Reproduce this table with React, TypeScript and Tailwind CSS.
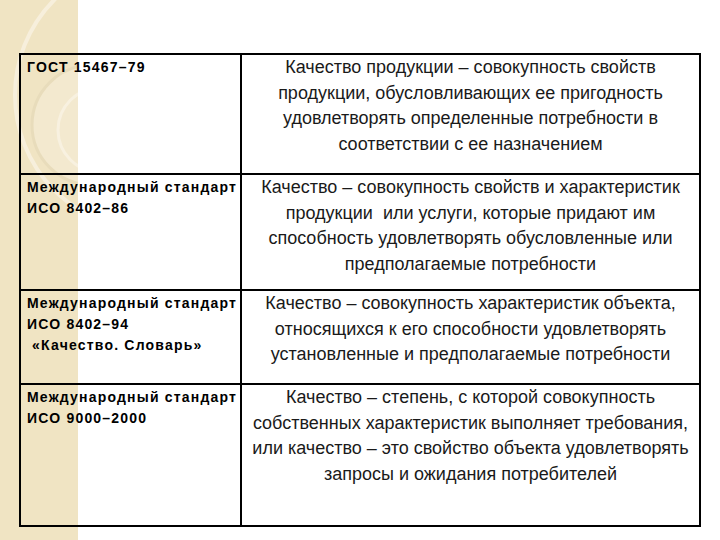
import React from "react";

const rows = [
  {
    left: ["ГОСТ 15467–79"],
    right: [
      "Качество продукции – совокупность свойств",
      "продукции, обусловливающих ее пригодность",
      "удовлетворять определенные потребности в",
      "соответствии с ее назначением",
    ],
    h: "h-[120px]",
  },
  {
    left: ["Международный стандарт", "ИСО 8402–86"],
    right: [
      "Качество – совокупность свойств и характеристик",
      "продукции  или услуги, которые придают им",
      "способность удовлетворять обусловленные или",
      "предполагаемые потребности",
    ],
    h: "h-[116px]",
  },
  {
    left: ["Международный стандарт", "ИСО 8402–94", "\u00a0«Качество. Словарь»"],
    right: [
      "Качество – совокупность характеристик объекта,",
      "относящихся к его способности удовлетворять",
      "установленные и предполагаемые потребности",
    ],
    h: "h-[94px]",
  },
  {
    left: ["Международный стандарт", "ИСО 9000–2000"],
    right: [
      "Качество – степень, с которой совокупность",
      "собственных характеристик выполняет требования,",
      "или качество – это свойство объекта удовлетворять",
      "запросы и ожидания потребителей",
    ],
    h: "h-[142px]",
  },
];

function Decor() {
  return (
    <svg className="absolute left-0 top-0" width="78" height="540" viewBox="0 0 78 540">
      <rect width="78" height="540" fill="#f0e4c3" />
      <circle cx="150" cy="95" r="135" fill="none" stroke="#f7efdc" strokeWidth="4" />
      <circle cx="92" cy="125" r="60" fill="#f3e9cf" stroke="#e8dcbb" strokeWidth="3" />
      <circle cx="100" cy="130" r="42" fill="none" stroke="#f8f1e0" strokeWidth="3" />
    </svg>
  );
}

export default function App() {
  return (
    <div className="relative w-[720px] h-[540px] bg-white overflow-hidden font-['Liberation_Sans',Arial,sans-serif] text-black">
      <Decor />
      <div className="relative pt-[53px] pl-[19px]">
        <table className="w-[682px] border-collapse">
          <tbody>
            {rows.map((r, i) => (
              <tr key={i} className={r.h}>
                <td className="w-[221px] border-2 border-black align-top pl-[6px] pt-[2px] text-[14px] leading-[21px] font-bold tracking-[1.2px]">
                  {r.left.map((l, j) => (
                    <div key={j} className="whitespace-pre">{l}</div>
                  ))}
                </td>
                <td className="border-2 border-black bg-white align-top px-[2px] pt-0 text-center text-[18px] leading-[25.7px] text-[#1a1a1a]">
                  {r.right.map((l, j) => (
                    <div key={j} className="whitespace-pre">{l}</div>
                  ))}
                </td>
              </tr>
            ))}
          </tbody>
        </table>
      </div>
    </div>
  );
}
